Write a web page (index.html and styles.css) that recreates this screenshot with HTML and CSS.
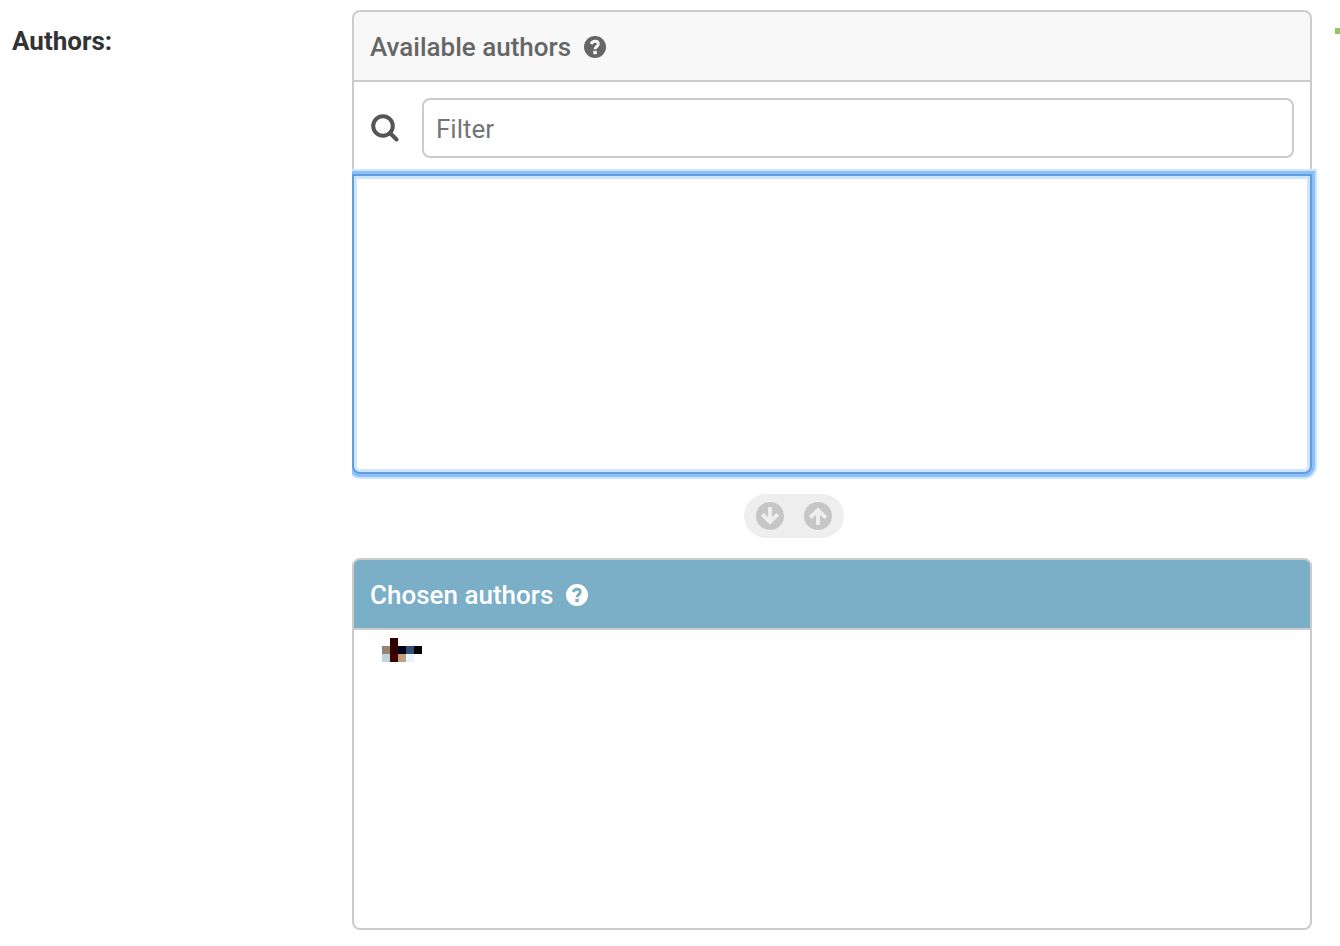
FILE: index.html
```html
<!DOCTYPE html>
<html lang="en">
<head>
<meta charset="utf-8">
<title>Authors</title>
<link rel="stylesheet" href="styles.css">
</head>
<body>
<form class="form-row">
  <label class="field-label" for="authors-from">Authors:</label>
  <div class="selector">
    <section class="panel">
      <h2 class="panel-title">
        <label for="authors-from">Available authors</label>
        <svg class="help" viewBox="0 0 22 22" aria-hidden="true">
          <circle cx="11" cy="11" r="11" fill="currentColor"/>
          <path class="help-mark" d="M7.200 8C8 6 9.300 5.300 11 5.300c2 0 3.300 1.100 3.300 2.800 0 2.400-3.200 2.500-3.200 5.200"/>
          <path class="help-dot" d="M9.300 14.800h3.500v3.400H9.300z"/>
        </svg>
      </h2>
      <div class="filter">
        <label class="filter-icon" for="authors-filter" aria-label="Filter authors">
          <svg viewBox="0 0 28 28" aria-hidden="true">
            <circle cx="12" cy="12" r="9.800"/>
            <path d="M19 19l6.500 6.500"/>
          </svg>
        </label>
        <input class="filter-input" id="authors-filter" type="text" placeholder="Filter">
      </div>
      <select class="list list-active" id="authors-from" multiple></select>
    </section>

    <div class="actions">
      <button class="move" type="button" aria-label="Choose">
        <svg viewBox="0 0 28 28" aria-hidden="true">
          <circle cx="14" cy="14" r="14"/>
          <path d="M14 5v15M6.300 12.300L14 20l7.700-7.700"/>
        </svg>
      </button>
      <button class="move" type="button" aria-label="Remove">
        <svg viewBox="0 0 28 28" aria-hidden="true">
          <circle cx="14" cy="14" r="14"/>
          <path d="M14 23V8M6.300 15.700L14 8l7.700 7.700"/>
        </svg>
      </button>
    </div>

    <section class="panel panel-chosen">
      <h2 class="panel-title">
        <label for="authors-to">Chosen authors</label>
        <svg class="help" viewBox="0 0 22 22" aria-hidden="true">
          <circle cx="11" cy="11" r="11" fill="currentColor"/>
          <path class="help-mark" d="M7.200 8C8 6 9.300 5.300 11 5.300c2 0 3.300 1.100 3.300 2.800 0 2.400-3.200 2.500-3.200 5.200"/>
          <path class="help-dot" d="M9.300 14.800h3.500v3.400H9.300z"/>
        </svg>
      </h2>
      <div class="list-wrap">
        <select class="list" id="authors-to" multiple></select>
        <svg class="redacted" viewBox="0 0 5 3" aria-hidden="true">
          <path fill="#300" d="M1 0h1v2H1z"/>
          <path fill="#988471" d="M0 1h1v1H0z"/>
          <path fill="#000018" d="M2 1h1v1H2z"/>
          <path fill="#2f5070" d="M3 1h1v1H3z"/>
          <path fill="#000" d="M4 1h1v1H4z"/>
          <path fill="#c1d4dc" d="M0 2h1v1H0z"/>
          <path fill="#400000" d="M1 2h1v1H1z"/>
          <path fill="#c29f7c" d="M2 2h1v1H2z"/>
          <path fill="#e5f4ff" d="M3 2h1v1H3z"/>
        </svg>
      </div>
    </section>
  </div>
  <a class="add" href="#" aria-label="Add another author">
    <svg viewBox="0 0 24 24" aria-hidden="true">
      <path d="M1 9h8V1h6v8h8v6h-8v8H9v-8H1z"/>
    </svg>
  </a>
</form>
</body>
</html>
```
FILE: styles.css
```css
* {
  box-sizing: border-box;
}

body {
  margin: 0;
  overflow-x: hidden;
  background: #fff;
  color: #333;
  font: 26px/32px Roboto, sans-serif;
}

.form-row {
  display: flex;
  align-items: flex-start;
  padding: 10px 0 16px 12px;
}

.field-label {
  flex: 0 0 340px;
  padding-top: 15px;
  font-weight: 700;
}

.selector {
  flex: 1;
  min-width: 0;
}

.panel {
  display: flex;
  flex-direction: column;
}

.panel-title {
  display: flex;
  align-items: center;
  gap: 13px;
  margin: 0;
  padding: 19px 16px 17px;
  border: 2px solid #ccc;
  border-radius: 8px 8px 0 0;
  background: #f8f8f8;
  color: #666;
  font-size: 26px;
  font-weight: 500;
}

.help {
  width: 22px;
  height: 22px;
}

.help-mark {
  fill: none;
  stroke: #f8f8f8;
  stroke-width: 3;
}

.help-dot {
  fill: #f8f8f8;
}

.panel-chosen .panel-title {
  background: #7baec7;
  color: #fff;
}

.panel-chosen .help-mark {
  stroke: #7baec7;
}

.panel-chosen .help-dot {
  fill: #7baec7;
}

.filter {
  display: flex;
  align-items: center;
  gap: 23px;
  padding: 16px;
  border: solid #ccc;
  border-width: 0 2px;
}

.filter-icon {
  display: flex;
  margin-left: 1px;
}

.filter-icon svg {
  width: 28px;
  height: 28px;
  fill: none;
  stroke: #555;
  stroke-width: 4;
  stroke-linecap: round;
}

.filter-input {
  flex: 1;
  min-width: 0;
  height: 60px;
  padding: 2px 12px 0;
  border: 2px solid #ccc;
  border-radius: 8px;
  background: #fff;
  color: #333;
  font: inherit;
}

.filter-input::placeholder {
  color: #757575;
}

.list {
  display: block;
  width: 100%;
  height: 300px;
  margin: 0;
  padding: 8px 20px;
  border: 2px solid #ccc;
  border-top: 0;
  border-radius: 0 0 8px 8px;
  outline: 0;
  background: #fff;
  font: inherit;
}

.list-active {
  border: 2px solid #629ddb;
  box-shadow: inset 0 0 0 3px #cee5fe, 0 0 0 3px #8bc1fb, 0 0 0 5px #cee5fe;
  clip-path: inset(-5px -5px -5px 0);
}

.actions {
  display: flex;
  gap: 20px;
  width: 100px;
  margin: 20px 0 20px calc(50% - 88px);
  padding: 8px 12px;
  border-radius: 22px;
  background: #eee;
}

.move {
  flex: none;
  width: 28px;
  height: 28px;
  padding: 0;
  border: 0;
  background: none;
}

.move svg {
  display: block;
  fill: #c6c6c6;
}

.move path {
  fill: none;
  stroke: #eee;
  stroke-width: 4;
}

.list-wrap {
  position: relative;
}

.redacted {
  position: absolute;
  top: 8px;
  left: 30px;
  width: 40px;
  height: 24px;
  shape-rendering: crispEdges;
}

.add {
  flex: none;
  width: 24px;
  margin: 9px -18px 0 22px;
}

.add svg {
  display: block;
  fill: #8fcb5c;
}
```
